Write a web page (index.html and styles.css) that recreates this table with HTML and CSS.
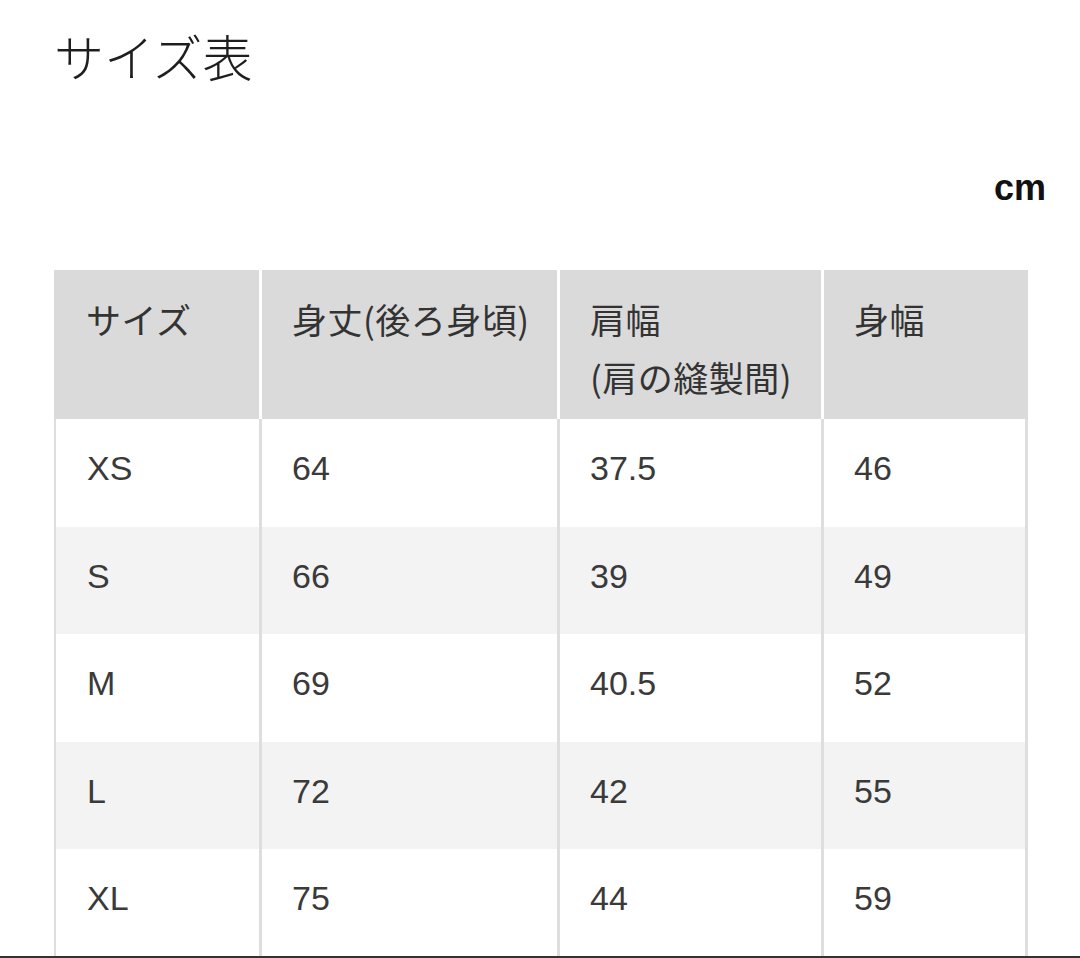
FILE: index.html
```html
<!DOCTYPE html>
<html lang="ja">
<head>
<meta charset="utf-8">
<link rel="stylesheet" href="styles.css">
</head>
<body>
<div class="page">
  <h1 class="title">サイズ表</h1>
  <div class="unit">cm</div>
  <table class="size-table">
    <colgroup>
      <col class="c1"><col class="c2"><col class="c3"><col class="c4">
    </colgroup>
    <thead>
      <tr>
        <th>サイズ</th>
        <th>身丈(後ろ身頃)</th>
        <th>肩幅<br>(肩の縫製間)</th>
        <th>身幅</th>
      </tr>
    </thead>
    <tbody>
      <tr><td>XS</td><td>64</td><td>37.5</td><td>46</td></tr>
      <tr class="alt"><td>S</td><td>66</td><td>39</td><td>49</td></tr>
      <tr><td>M</td><td>69</td><td>40.5</td><td>52</td></tr>
      <tr class="alt"><td>L</td><td>72</td><td>42</td><td>55</td></tr>
      <tr><td>XL</td><td>75</td><td>44</td><td>59</td></tr>
    </tbody>
  </table>
</div>
<div class="bottom-line"></div>
</body>
</html>
```

FILE: styles.css
```css
html, body {
  margin: 0;
  padding: 0;
  background: #fff;
  overflow: hidden;
}
.page {
  padding: 25px 36px 0 54px;
  font-family: "Liberation Sans", "Noto Sans CJK JP", sans-serif;
  color: #333;
}
.title {
  margin: 0;
  font-family: "Noto Sans CJK JP", sans-serif;
  font-weight: 300;
  font-size: 50px;
  line-height: 60px;
  color: #1e1e1e;
}
.unit {
  margin-top: 83px;
  text-align: right;
  font-family: "Liberation Sans", sans-serif;
  font-weight: 700;
  font-size: 36px;
  line-height: 40px;
  color: #111;
  margin-right: -2px;
}
.size-table {
  margin-top: 62px;
  width: 974px;
  border-collapse: separate;
  border-spacing: 0;
  table-layout: fixed;
  font-size: 34px;
}
.c1 { width: 208px; }
.c2 { width: 298px; }
.c3 { width: 264px; }
.c4 { width: 204px; }
.size-table th,
.size-table td {
  text-align: left;
  vertical-align: top;
  padding: 20px 10px 0 30px;
  line-height: 58px;
  font-weight: 400;
  color: #3a3a3a;
}
.size-table th {
  background: #dadada;
  height: 129px;
  border-right: 3px solid #fff;
  font-family: "Noto Sans CJK JP", sans-serif;
  font-size: 35px;
  font-weight: 400;
  color: #333;
  line-height: 58px;
  letter-spacing: 0.5px;
}
.size-table th:first-child { padding-left: 32px; }
.size-table th:last-child { border-right: none; }
.size-table td {
  height: 87.6px;
  border-right: 3px solid #dedede;
}
.size-table td:first-child {
  border-left: 2px solid #dedede;
  padding-left: 31px;
}
.size-table tr.alt td { background: #f3f3f3; }
.bottom-line {
  position: fixed;
  left: 0;
  right: 0;
  bottom: 0;
  height: 2px;
  background: #333;
}
```
